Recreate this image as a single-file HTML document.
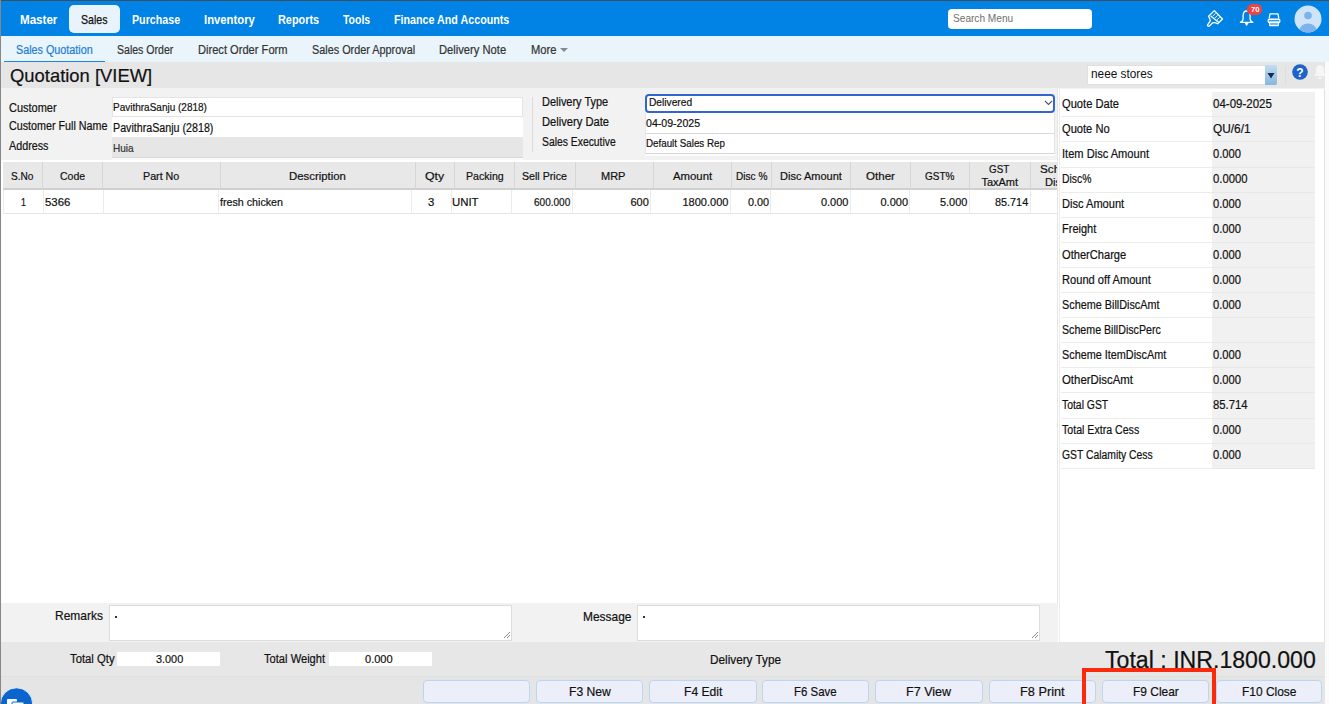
<!DOCTYPE html>
<html><head><meta charset="utf-8">
<style>
*{box-sizing:border-box;margin:0;padding:0}
html,body{width:1329px;height:704px;overflow:hidden;background:#fff;font-family:"Liberation Sans",sans-serif}
.r{position:absolute}
.t{position:absolute;white-space:nowrap;transform-origin:0 0;-webkit-text-stroke:0.2px currentColor}
</style></head><body>
<div class="r" style="left:0px;top:0px;width:1329px;height:704px;background:#ffffff"></div>
<div class="r" style="left:0px;top:0px;width:1329px;height:1px;background:#3d4f5f"></div>
<div class="r" style="left:0px;top:1px;width:1329px;height:35px;background:#0182e5"></div>
<div class="r" style="left:69px;top:5px;width:51px;height:28px;background:#e9f3fb;border-radius:5px"></div>
<div class="t" style="left:19.90px;top:12.70px;font-size:13px;line-height:13px;font-weight:bold;-webkit-text-stroke:0;color:#fff;transform:scaleX(0.8921);">Master</div>
<div class="t" style="left:81.10px;top:12.60px;font-size:13px;line-height:13px;color:#111;transform:scaleX(0.8154);-webkit-text-stroke:0.25px #111;">Sales</div>
<div class="t" style="left:131.60px;top:12.70px;font-size:13px;line-height:13px;font-weight:bold;-webkit-text-stroke:0;color:#fff;transform:scaleX(0.8213);">Purchase</div>
<div class="t" style="left:203.50px;top:12.70px;font-size:13px;line-height:13px;font-weight:bold;-webkit-text-stroke:0;color:#fff;transform:scaleX(0.8684);">Inventory</div>
<div class="t" style="left:277.80px;top:12.70px;font-size:13px;line-height:13px;font-weight:bold;-webkit-text-stroke:0;color:#fff;transform:scaleX(0.8384);">Reports</div>
<div class="t" style="left:343.10px;top:12.70px;font-size:13px;line-height:13px;font-weight:bold;-webkit-text-stroke:0;color:#fff;transform:scaleX(0.8049);">Tools</div>
<div class="t" style="left:393.50px;top:12.70px;font-size:13px;line-height:13px;font-weight:bold;-webkit-text-stroke:0;color:#fff;transform:scaleX(0.8243);">Finance And Accounts</div>
<div class="r" style="left:948px;top:9px;width:144px;height:20px;background:#fff;border-radius:4px"></div>
<div class="t" style="left:952.80px;top:13.11px;font-size:10.5px;line-height:10.5px;color:#6f6f6f;transform:scaleX(0.9636);-webkit-text-stroke:0;">Search Menu</div>
<div class="r" style="left:0px;top:36px;width:1329px;height:26px;background:#e9f4fb"></div>
<div class="t" style="left:15.80px;top:43.64px;font-size:12px;line-height:12px;color:#1b7ed4;transform:scaleX(0.8983);">Sales Quotation</div>
<div class="r" style="left:4px;top:60.6px;width:101px;height:1.6px;background:#1a86e0"></div>
<div class="t" style="left:116.70px;top:43.64px;font-size:12px;line-height:12px;color:#333;transform:scaleX(0.8794);">Sales Order</div>
<div class="t" style="left:197.50px;top:43.64px;font-size:12px;line-height:12px;color:#333;transform:scaleX(0.9259);">Direct Order Form</div>
<div class="t" style="left:311.50px;top:43.64px;font-size:12px;line-height:12px;color:#333;transform:scaleX(0.9039);">Sales Order Approval</div>
<div class="t" style="left:438.70px;top:43.64px;font-size:12px;line-height:12px;color:#333;transform:scaleX(0.9319);">Delivery Note</div>
<div class="t" style="left:530.50px;top:43.64px;font-size:12px;line-height:12px;color:#333;transform:scaleX(0.9320);">More</div>
<svg class="r" style="left:559px;top:47px" width="10" height="6"><path d="M1 1 L9 1 L5 5 Z" fill="#888"/></svg>
<div class="r" style="left:0px;top:62px;width:1325px;height:26px;background:#e6e6e6"></div>
<div class="t" style="left:9.50px;top:66.32px;font-size:19px;line-height:19px;color:#111;transform:scaleX(0.9688);">Quotation [VIEW]</div>
<div class="r" style="left:1087px;top:65px;width:190px;height:20px;background:#fff;border:1px solid #e0e0e0"></div>
<div class="r" style="left:1265px;top:65px;width:12px;height:20px;background:linear-gradient(#c2ddef,#86b6dc);border-radius:0 2px 2px 0"></div>
<svg class="r" style="left:1267px;top:72px" width="8" height="7"><path d="M0.5 1 L7.5 1 L4 6.5 Z" fill="#0e2a5a"/></svg>
<div class="r" style="left:1285px;top:66px;width:1px;height:18px;background:#dddddd"></div>
<div class="t" style="left:1091.00px;top:68.04px;font-size:12px;line-height:12px;color:#111;transform:scaleX(0.9841);-webkit-text-stroke:0;">neee stores</div>
<svg class="r" style="left:1292px;top:64px" width="16" height="16"><circle cx="8" cy="8" r="7.8" fill="#1e63c8"/><text x="8" y="12.5" font-family="Liberation Sans" font-size="12" font-weight="bold" fill="#fff" text-anchor="middle">?</text></svg>
<div class="r" style="left:0px;top:88px;width:1329px;height:72px;background:#f2f2f2"></div>
<div class="t" style="left:9.30px;top:101.84px;font-size:12px;line-height:12px;color:#111;transform:scaleX(0.9150);">Customer</div>
<div class="t" style="left:9.30px;top:119.94px;font-size:12px;line-height:12px;color:#111;transform:scaleX(0.8942);">Customer Full Name</div>
<div class="t" style="left:9.30px;top:140.34px;font-size:12px;line-height:12px;color:#111;transform:scaleX(0.8969);">Address</div>
<div class="r" style="left:112px;top:97px;width:411px;height:20px;background:#fff;border:1px solid #e4e4e4"></div>
<div class="r" style="left:112px;top:117px;width:411px;height:21px;background:#fff;border-bottom:1px solid #e4e4e4"></div>
<div class="r" style="left:112px;top:137px;width:411px;height:21px;background:#e6e6e6"></div>
<div class="t" style="left:113.40px;top:102.09px;font-size:11px;line-height:11px;color:#111;transform:scaleX(0.9086);">PavithraSanju (2818)</div>
<div class="t" style="left:113.40px;top:121.54px;font-size:12px;line-height:12px;color:#111;transform:scaleX(0.8905);">PavithraSanju (2818)</div>
<div class="t" style="left:113.40px;top:142.99px;font-size:11px;line-height:11px;color:#333;transform:scaleX(0.9135);">Huia</div>
<div class="r" style="left:532px;top:97px;width:1px;height:55px;background:#dcdcdc"></div>
<div class="t" style="left:541.80px;top:96.04px;font-size:12px;line-height:12px;color:#111;transform:scaleX(0.9134);">Delivery Type</div>
<div class="t" style="left:541.80px;top:116.24px;font-size:12px;line-height:12px;color:#111;transform:scaleX(0.9306);">Delivery Date</div>
<div class="t" style="left:541.80px;top:136.14px;font-size:12px;line-height:12px;color:#111;transform:scaleX(0.8632);">Sales Executive</div>
<div class="r" style="left:645px;top:94px;width:410px;height:19px;background:#fff;border:2px solid #2f67cf;border-radius:4px"></div>
<svg class="r" style="left:1044px;top:100px" width="10" height="7"><path d="M1 1 L4.5 4.5 L8 1" stroke="#555" stroke-width="1.1" fill="none"/></svg>
<div class="t" style="left:649.00px;top:96.89px;font-size:11px;line-height:11px;color:#111;transform:scaleX(0.9274);">Delivered</div>
<div class="r" style="left:645px;top:113px;width:410px;height:21px;background:#fff;border-bottom:1px solid #d8d8d8;border-right:1px solid #e4e4e4;border-left:1px solid #e8e8e8"></div>
<div class="r" style="left:645px;top:134px;width:410px;height:20px;background:#fff;border-bottom:1px solid #d8d8d8;border-right:1px solid #e4e4e4;border-left:1px solid #e8e8e8"></div>
<div class="r" style="left:645px;top:154px;width:410px;height:2px;background:#fcfcfc"></div>
<div class="t" style="left:645.50px;top:118.09px;font-size:11px;line-height:11px;color:#111;transform:scaleX(0.9615);">04-09-2025</div>
<div class="t" style="left:645.50px;top:137.99px;font-size:11px;line-height:11px;color:#111;transform:scaleX(0.8899);">Default Sales Rep</div>
<div class="r" style="left:112px;top:157px;width:411px;height:3px;background:#fafafa;border-top:1px solid #d8d8d8"></div>
<div class="r" style="left:1px;top:160px;width:1057px;height:2px;background:#fff"></div>
<div class="r" style="left:3px;top:162px;width:1054px;height:28px;background:#e8e8e8;border-bottom:2px solid #d0d0d0"></div>
<div class="r" style="left:42px;top:162px;width:1px;height:27px;background:#d6d6d6"></div>
<div class="r" style="left:102px;top:162px;width:1px;height:27px;background:#d6d6d6"></div>
<div class="r" style="left:220px;top:162px;width:1px;height:27px;background:#d6d6d6"></div>
<div class="r" style="left:415px;top:162px;width:1px;height:27px;background:#d6d6d6"></div>
<div class="r" style="left:454px;top:162px;width:1px;height:27px;background:#d6d6d6"></div>
<div class="r" style="left:514px;top:162px;width:1px;height:27px;background:#d6d6d6"></div>
<div class="r" style="left:575px;top:162px;width:1px;height:27px;background:#d6d6d6"></div>
<div class="r" style="left:653px;top:162px;width:1px;height:27px;background:#d6d6d6"></div>
<div class="r" style="left:731px;top:162px;width:1px;height:27px;background:#d6d6d6"></div>
<div class="r" style="left:771px;top:162px;width:1px;height:27px;background:#d6d6d6"></div>
<div class="r" style="left:850px;top:162px;width:1px;height:27px;background:#d6d6d6"></div>
<div class="r" style="left:910px;top:162px;width:1px;height:27px;background:#d6d6d6"></div>
<div class="r" style="left:969px;top:162px;width:1px;height:27px;background:#d6d6d6"></div>
<div class="r" style="left:1030px;top:162px;width:1px;height:27px;background:#d6d6d6"></div>
<div class="t" style="left:11.20px;top:170.59px;font-size:11px;line-height:11px;color:#111;transform:scaleX(0.9193);">S.No</div>
<div class="t" style="left:59.70px;top:170.59px;font-size:11px;line-height:11px;color:#111;transform:scaleX(0.9547);">Code</div>
<div class="t" style="left:142.80px;top:170.59px;font-size:11px;line-height:11px;color:#111;transform:scaleX(0.9735);">Part No</div>
<div class="t" style="left:288.50px;top:170.59px;font-size:11px;line-height:11px;color:#111;transform:scaleX(1.0345);">Description</div>
<div class="t" style="left:425.20px;top:170.59px;font-size:11px;line-height:11px;color:#111;transform:scaleX(1.1225);">Qty</div>
<div class="t" style="left:465.80px;top:170.59px;font-size:11px;line-height:11px;color:#111;transform:scaleX(0.9653);">Packing</div>
<div class="t" style="left:521.60px;top:170.59px;font-size:11px;line-height:11px;color:#111;transform:scaleX(0.9661);">Sell Price</div>
<div class="t" style="left:601.00px;top:170.59px;font-size:11px;line-height:11px;color:#111;">MRP</div>
<div class="t" style="left:672.60px;top:170.59px;font-size:11px;line-height:11px;color:#111;transform:scaleX(1.0318);">Amount</div>
<div class="t" style="left:735.90px;top:170.59px;font-size:11px;line-height:11px;color:#111;transform:scaleX(0.9179);">Disc %</div>
<div class="t" style="left:780.10px;top:170.59px;font-size:11px;line-height:11px;color:#111;">Disc Amount</div>
<div class="t" style="left:865.80px;top:170.59px;font-size:11px;line-height:11px;color:#111;transform:scaleX(1.0509);">Other</div>
<div class="t" style="left:925.20px;top:170.59px;font-size:11px;line-height:11px;color:#111;transform:scaleX(0.9075);">GST%</div>
<div class="t" style="left:989.40px;top:163.99px;font-size:11px;line-height:11px;color:#111;transform:scaleX(0.8936);">GST</div>
<div class="t" style="left:981.40px;top:176.99px;font-size:11px;line-height:11px;color:#111;">TaxAmt</div>
<div class="r" style="left:1031px;top:162px;width:26px;height:26px;overflow:hidden">
<div class="t" style="left:9.30px;top:1.99px;font-size:11px;line-height:11px;color:#111;transform:scaleX(1.0646);">Sch</div>
<div class="t" style="left:14.00px;top:14.99px;font-size:11px;line-height:11px;color:#111;transform:scaleX(1.0066);">Dis</div>
</div>
<div class="r" style="left:3px;top:190px;width:1054px;height:24px;background:#fff;border-bottom:1px solid #e6e6e6"></div>
<div class="r" style="left:43px;top:190px;width:1px;height:24px;background:#ececec"></div>
<div class="r" style="left:103px;top:190px;width:1px;height:24px;background:#ececec"></div>
<div class="r" style="left:218px;top:190px;width:1px;height:24px;background:#ececec"></div>
<div class="r" style="left:411px;top:190px;width:1px;height:24px;background:#ececec"></div>
<div class="r" style="left:451px;top:190px;width:1px;height:24px;background:#ececec"></div>
<div class="r" style="left:511px;top:190px;width:1px;height:24px;background:#ececec"></div>
<div class="r" style="left:572px;top:190px;width:1px;height:24px;background:#ececec"></div>
<div class="r" style="left:650px;top:190px;width:1px;height:24px;background:#ececec"></div>
<div class="r" style="left:730px;top:190px;width:1px;height:24px;background:#ececec"></div>
<div class="r" style="left:770px;top:190px;width:1px;height:24px;background:#ececec"></div>
<div class="r" style="left:850px;top:190px;width:1px;height:24px;background:#ececec"></div>
<div class="r" style="left:909px;top:190px;width:1px;height:24px;background:#ececec"></div>
<div class="r" style="left:969px;top:190px;width:1px;height:24px;background:#ececec"></div>
<div class="r" style="left:1030px;top:190px;width:1px;height:24px;background:#ececec"></div>
<div class="r" style="left:3px;top:190px;width:1px;height:24px;background:#ececec"></div>
<div class="t" style="left:21.10px;top:197.09px;font-size:11px;line-height:11px;color:#111;transform:scaleX(0.8026);">1</div>
<div class="t" style="left:44.70px;top:197.09px;font-size:11px;line-height:11px;color:#111;transform:scaleX(1.0378);">5366</div>
<div class="t" style="left:220.00px;top:197.09px;font-size:11px;line-height:11px;color:#111;transform:scaleX(0.9724);">fresh chicken</div>
<div class="t" style="left:428.00px;top:197.09px;font-size:11px;line-height:11px;color:#111;transform:scaleX(1.0319);">3</div>
<div class="t" style="left:452.40px;top:197.09px;font-size:11px;line-height:11px;color:#111;transform:scaleX(1.0356);">UNIT</div>
<div class="t" style="left:534.00px;top:197.09px;font-size:11px;line-height:11px;color:#111;transform:scaleX(0.9103);">600.000</div>
<div class="t" style="left:630.50px;top:197.09px;font-size:11px;line-height:11px;color:#111;">600</div>
<div class="t" style="left:682.50px;top:197.09px;font-size:11px;line-height:11px;color:#111;">1800.000</div>
<div class="t" style="left:748.00px;top:197.09px;font-size:11px;line-height:11px;color:#111;transform:scaleX(0.9862);">0.00</div>
<div class="t" style="left:820.50px;top:197.09px;font-size:11px;line-height:11px;color:#111;transform:scaleX(0.9944);">0.000</div>
<div class="t" style="left:880.50px;top:197.09px;font-size:11px;line-height:11px;color:#111;">0.000</div>
<div class="t" style="left:940.20px;top:197.09px;font-size:11px;line-height:11px;color:#111;transform:scaleX(0.9944);">5.000</div>
<div class="t" style="left:994.50px;top:197.09px;font-size:11px;line-height:11px;color:#111;transform:scaleX(0.9863);">85.714</div>
<div class="r" style="left:1058px;top:88px;width:271px;height:555px;background:#f2f2f2"></div>
<div class="r" style="left:1057px;top:89px;width:268px;height:554px;background:#fff;border-left:1px solid #e6e6e6;border-right:1px solid #e2e2e2"></div>
<div class="r" style="left:1059px;top:89px;width:1px;height:554px;background:#ececec"></div>
<div class="r" style="left:1061px;top:92px;width:151px;height:25px;background:#fff;border-bottom:1px solid #ececec"></div>
<div class="r" style="left:1212px;top:92px;width:103px;height:25px;background:#f1f1f1;border-bottom:1px solid #e8e8e8"></div>
<div class="t" style="left:1061.80px;top:97.99px;font-size:12px;line-height:12px;color:#111;transform:scaleX(0.9278);">Quote Date</div>
<div class="t" style="left:1213.00px;top:97.99px;font-size:12px;line-height:12px;color:#111;transform:scaleX(0.9596);">04-09-2025</div>
<div class="r" style="left:1061px;top:117px;width:151px;height:25px;background:#fff;border-bottom:1px solid #ececec"></div>
<div class="r" style="left:1212px;top:117px;width:103px;height:25px;background:#f1f1f1;border-bottom:1px solid #e8e8e8"></div>
<div class="t" style="left:1061.80px;top:123.09px;font-size:12px;line-height:12px;color:#111;transform:scaleX(0.9268);">Quote No</div>
<div class="t" style="left:1213.00px;top:123.09px;font-size:12px;line-height:12px;color:#111;transform:scaleX(0.9884);">QU/6/1</div>
<div class="r" style="left:1061px;top:142px;width:151px;height:26px;background:#fff;border-bottom:1px solid #ececec"></div>
<div class="r" style="left:1212px;top:142px;width:103px;height:26px;background:#f1f1f1;border-bottom:1px solid #e8e8e8"></div>
<div class="t" style="left:1061.80px;top:148.19px;font-size:12px;line-height:12px;color:#111;transform:scaleX(0.9248);">Item Disc Amount</div>
<div class="t" style="left:1213.00px;top:148.19px;font-size:12px;line-height:12px;color:#111;transform:scaleX(0.9315);">0.000</div>
<div class="r" style="left:1061px;top:168px;width:151px;height:25px;background:#fff;border-bottom:1px solid #ececec"></div>
<div class="r" style="left:1212px;top:168px;width:103px;height:25px;background:#f1f1f1;border-bottom:1px solid #e8e8e8"></div>
<div class="t" style="left:1061.80px;top:173.29px;font-size:12px;line-height:12px;color:#111;transform:scaleX(0.8657);">Disc%</div>
<div class="t" style="left:1213.00px;top:173.29px;font-size:12px;line-height:12px;color:#111;transform:scaleX(0.9395);">0.0000</div>
<div class="r" style="left:1061px;top:193px;width:151px;height:25px;background:#fff;border-bottom:1px solid #ececec"></div>
<div class="r" style="left:1212px;top:193px;width:103px;height:25px;background:#f1f1f1;border-bottom:1px solid #e8e8e8"></div>
<div class="t" style="left:1061.80px;top:198.39px;font-size:12px;line-height:12px;color:#111;transform:scaleX(0.9231);">Disc Amount</div>
<div class="t" style="left:1213.00px;top:198.39px;font-size:12px;line-height:12px;color:#111;transform:scaleX(0.9315);">0.000</div>
<div class="r" style="left:1061px;top:218px;width:151px;height:25px;background:#fff;border-bottom:1px solid #ececec"></div>
<div class="r" style="left:1212px;top:218px;width:103px;height:25px;background:#f1f1f1;border-bottom:1px solid #e8e8e8"></div>
<div class="t" style="left:1061.80px;top:223.49px;font-size:12px;line-height:12px;color:#111;transform:scaleX(0.9164);">Freight</div>
<div class="t" style="left:1213.00px;top:223.49px;font-size:12px;line-height:12px;color:#111;transform:scaleX(0.9315);">0.000</div>
<div class="r" style="left:1061px;top:243px;width:151px;height:25px;background:#fff;border-bottom:1px solid #ececec"></div>
<div class="r" style="left:1212px;top:243px;width:103px;height:25px;background:#f1f1f1;border-bottom:1px solid #e8e8e8"></div>
<div class="t" style="left:1061.80px;top:248.59px;font-size:12px;line-height:12px;color:#111;transform:scaleX(0.9256);">OtherCharge</div>
<div class="t" style="left:1213.00px;top:248.59px;font-size:12px;line-height:12px;color:#111;transform:scaleX(0.9315);">0.000</div>
<div class="r" style="left:1061px;top:268px;width:151px;height:25px;background:#fff;border-bottom:1px solid #ececec"></div>
<div class="r" style="left:1212px;top:268px;width:103px;height:25px;background:#f1f1f1;border-bottom:1px solid #e8e8e8"></div>
<div class="t" style="left:1061.80px;top:273.69px;font-size:12px;line-height:12px;color:#111;transform:scaleX(0.9262);">Round off Amount</div>
<div class="t" style="left:1213.00px;top:273.69px;font-size:12px;line-height:12px;color:#111;transform:scaleX(0.9315);">0.000</div>
<div class="r" style="left:1061px;top:293px;width:151px;height:25px;background:#fff;border-bottom:1px solid #ececec"></div>
<div class="r" style="left:1212px;top:293px;width:103px;height:25px;background:#f1f1f1;border-bottom:1px solid #e8e8e8"></div>
<div class="t" style="left:1061.80px;top:298.79px;font-size:12px;line-height:12px;color:#111;transform:scaleX(0.9028);">Scheme BillDiscAmt</div>
<div class="t" style="left:1213.00px;top:298.79px;font-size:12px;line-height:12px;color:#111;transform:scaleX(0.9315);">0.000</div>
<div class="r" style="left:1061px;top:318px;width:151px;height:25px;background:#fff;border-bottom:1px solid #ececec"></div>
<div class="r" style="left:1212px;top:318px;width:103px;height:25px;background:#f1f1f1;border-bottom:1px solid #e8e8e8"></div>
<div class="t" style="left:1061.80px;top:323.89px;font-size:12px;line-height:12px;color:#111;transform:scaleX(0.8872);">Scheme BillDiscPerc</div>
<div class="r" style="left:1061px;top:343px;width:151px;height:25px;background:#fff;border-bottom:1px solid #ececec"></div>
<div class="r" style="left:1212px;top:343px;width:103px;height:25px;background:#f1f1f1;border-bottom:1px solid #e8e8e8"></div>
<div class="t" style="left:1061.80px;top:348.99px;font-size:12px;line-height:12px;color:#111;transform:scaleX(0.9031);">Scheme ItemDiscAmt</div>
<div class="t" style="left:1213.00px;top:348.99px;font-size:12px;line-height:12px;color:#111;transform:scaleX(0.9315);">0.000</div>
<div class="r" style="left:1061px;top:368px;width:151px;height:25px;background:#fff;border-bottom:1px solid #ececec"></div>
<div class="r" style="left:1212px;top:368px;width:103px;height:25px;background:#f1f1f1;border-bottom:1px solid #e8e8e8"></div>
<div class="t" style="left:1061.80px;top:374.09px;font-size:12px;line-height:12px;color:#111;transform:scaleX(0.9505);">OtherDiscAmt</div>
<div class="t" style="left:1213.00px;top:374.09px;font-size:12px;line-height:12px;color:#111;transform:scaleX(0.9315);">0.000</div>
<div class="r" style="left:1061px;top:393px;width:151px;height:26px;background:#fff;border-bottom:1px solid #ececec"></div>
<div class="r" style="left:1212px;top:393px;width:103px;height:26px;background:#f1f1f1;border-bottom:1px solid #e8e8e8"></div>
<div class="t" style="left:1061.80px;top:399.19px;font-size:12px;line-height:12px;color:#111;transform:scaleX(0.8661);">Total GST</div>
<div class="t" style="left:1213.00px;top:399.19px;font-size:12px;line-height:12px;color:#111;transform:scaleX(0.9395);">85.714</div>
<div class="r" style="left:1061px;top:419px;width:151px;height:25px;background:#fff;border-bottom:1px solid #ececec"></div>
<div class="r" style="left:1212px;top:419px;width:103px;height:25px;background:#f1f1f1;border-bottom:1px solid #e8e8e8"></div>
<div class="t" style="left:1061.80px;top:424.29px;font-size:12px;line-height:12px;color:#111;transform:scaleX(0.8837);">Total Extra Cess</div>
<div class="t" style="left:1213.00px;top:424.29px;font-size:12px;line-height:12px;color:#111;transform:scaleX(0.9315);">0.000</div>
<div class="r" style="left:1061px;top:444px;width:151px;height:25px;background:#fff;border-bottom:1px solid #ececec"></div>
<div class="r" style="left:1212px;top:444px;width:103px;height:25px;background:#f1f1f1;border-bottom:1px solid #e8e8e8"></div>
<div class="t" style="left:1061.80px;top:449.39px;font-size:12px;line-height:12px;color:#111;transform:scaleX(0.8628);">GST Calamity Cess</div>
<div class="t" style="left:1213.00px;top:449.39px;font-size:12px;line-height:12px;color:#111;transform:scaleX(0.9315);">0.000</div>
<div class="r" style="left:1px;top:603px;width:1057px;height:39px;background:#f2f2f2"></div>
<div class="t" style="left:55.00px;top:609.40px;font-size:13px;line-height:13px;color:#111;transform:scaleX(0.9212);">Remarks</div>
<div class="r" style="left:109px;top:605px;width:403px;height:36px;background:#fff;border:1px solid #dcdcdc"></div>
<div class="t" style="left:583.10px;top:609.50px;font-size:13px;line-height:13px;color:#111;transform:scaleX(0.9189);">Message</div>
<div class="r" style="left:637px;top:605px;width:403px;height:36px;background:#fff;border:1px solid #dcdcdc"></div>
<div class="r" style="left:115px;top:616px;width:2px;height:2px;background:#333"></div>
<div class="r" style="left:643px;top:616px;width:2px;height:2px;background:#333"></div>
<svg class="r" style="left:503px;top:631px" width="8" height="8"><path d="M7 1 L1 7 M7 4 L4 7" stroke="#888" stroke-width="1"/></svg>
<svg class="r" style="left:1031px;top:631px" width="8" height="8"><path d="M7 1 L1 7 M7 4 L4 7" stroke="#888" stroke-width="1"/></svg>
<div class="r" style="left:1px;top:642px;width:1328px;height:34px;background:#e7e7e7"></div>
<div class="r" style="left:1px;top:676px;width:1328px;height:28px;background:#e5e5e5;border-top:1px solid #e0e0e0"></div>
<div class="t" style="left:70.00px;top:653.44px;font-size:12px;line-height:12px;color:#111;transform:scaleX(0.9421);">Total Qty</div>
<div class="r" style="left:117px;top:652px;width:103px;height:14px;background:#fff"></div>
<div class="t" style="left:155.80px;top:654.07px;font-size:11.5px;line-height:11.5px;color:#111;transform:scaleX(0.9442);">3.000</div>
<div class="t" style="left:264.20px;top:653.44px;font-size:12px;line-height:12px;color:#111;transform:scaleX(0.9283);">Total Weight</div>
<div class="r" style="left:329px;top:652px;width:103px;height:14px;background:#fff"></div>
<div class="t" style="left:365.40px;top:654.07px;font-size:11.5px;line-height:11.5px;color:#111;transform:scaleX(0.9616);">0.000</div>
<div class="t" style="left:709.50px;top:653.64px;font-size:12px;line-height:12px;color:#111;transform:scaleX(0.9796);">Delivery Type</div>
<div class="t" style="left:1105.40px;top:648.71px;font-size:23.5px;line-height:23.5px;color:#111;transform:scaleX(0.9841);">Total : INR.1800.000</div>
<div class="r" style="left:423px;top:680px;width:107px;height:23px;background:#eceff9;border:1px solid #b9d6f2;border-radius:4px"></div>
<div class="r" style="left:536px;top:680px;width:107px;height:23px;background:#eceff9;border:1px solid #b9d6f2;border-radius:4px"></div>
<div class="t" style="left:568.55px;top:685.40px;font-size:13px;line-height:13px;color:#111;transform:scaleX(0.9342);">F3 New</div>
<div class="r" style="left:649px;top:680px;width:108px;height:23px;background:#eceff9;border:1px solid #b9d6f2;border-radius:4px"></div>
<div class="t" style="left:683.80px;top:685.40px;font-size:13px;line-height:13px;color:#111;transform:scaleX(0.9318);">F4 Edit</div>
<div class="r" style="left:762px;top:680px;width:107px;height:23px;background:#eceff9;border:1px solid #b9d6f2;border-radius:4px"></div>
<div class="t" style="left:794.20px;top:685.40px;font-size:13px;line-height:13px;color:#111;transform:scaleX(0.8797);">F6 Save</div>
<div class="r" style="left:875px;top:680px;width:108px;height:23px;background:#eceff9;border:1px solid #b9d6f2;border-radius:4px"></div>
<div class="t" style="left:906.45px;top:685.40px;font-size:13px;line-height:13px;color:#111;transform:scaleX(0.9650);">F7 View</div>
<div class="r" style="left:989px;top:680px;width:107px;height:23px;background:#eceff9;border:1px solid #b9d6f2;border-radius:4px"></div>
<div class="t" style="left:1020.20px;top:685.40px;font-size:13px;line-height:13px;color:#111;transform:scaleX(0.9802);">F8 Print</div>
<div class="r" style="left:1102px;top:680px;width:107px;height:23px;background:#eceff9;border:1px solid #b9d6f2;border-radius:4px"></div>
<div class="t" style="left:1132.60px;top:685.40px;font-size:13px;line-height:13px;color:#111;transform:scaleX(0.9187);">F9 Clear</div>
<div class="r" style="left:1216px;top:680px;width:106px;height:23px;background:#eceff9;border:1px solid #b9d6f2;border-radius:4px"></div>
<div class="t" style="left:1241.75px;top:685.40px;font-size:13px;line-height:13px;color:#111;transform:scaleX(0.9194);">F10 Close</div>
<div class="r" style="left:1082px;top:668px;width:134px;height:40px;border:4px solid #fb2a0c"></div>
<svg class="r" style="left:0px;top:687px" width="34" height="17"><circle cx="16.5" cy="17" r="16.2" fill="#0a66cc" stroke="#fff" stroke-width="0.8"/><rect x="7" y="12" width="10" height="6" rx="1" fill="#fff"/><rect x="12" y="15" width="12" height="4" rx="1" fill="#fff" stroke="#0a66cc" stroke-width="1"/></svg>
<svg class="r" style="left:1205px;top:8px" width="20" height="20" viewBox="0 0 20 20">
<g fill="none" stroke="#fff" stroke-width="1.3" stroke-linejoin="round" stroke-linecap="round">
<path d="M9.3 2.6 L17.5 11 L12.7 15.8 Q10.2 14.3 7.7 14.8 L4.6 17.9 Q3.2 18.9 2.4 17.2 L5.3 12.8 Q5 10.2 3.6 8.3 Z"/>
<path d="M6 8.2 L13.6 14.2"/>
<path d="M10.3 5.6 L8.3 7.6 M12.3 7.6 L10.3 9.6 M14.3 9.6 L12.3 11.6" stroke-width="1"/>
</g></svg>
<svg class="r" style="left:1239px;top:10px" width="16" height="17" viewBox="0 0 16 17">
<path d="M7.6 1 C5 1 4.1 3.2 4.1 6 L4.1 9.3 Q3.8 11 1.4 12.4 L13.8 12.4 Q11.4 11 11.1 9.3 L11.1 6 C11.1 3.2 10.2 1 7.6 1 Z" fill="none" stroke="#fff" stroke-width="1.3" stroke-linejoin="round"/>
<path d="M6 12.8 L7.6 15.6 L9.2 12.8 Z" fill="#fff" stroke="#fff" stroke-width="0.8" stroke-linejoin="round"/>
</svg>
<div class="r" style="left:1247px;top:4px;width:15px;height:11px;background:#ec4343;border-radius:5px"></div>
<div class="t" style="left:1250.90px;top:5.95px;font-size:7.5px;line-height:7.5px;font-weight:bold;-webkit-text-stroke:0;color:#fff;transform:scaleX(1.0210);">70</div>
<svg class="r" style="left:1266px;top:12px" width="16" height="15" viewBox="0 0 16 15">
<path d="M3.2 6.4 L4 1.8 L12 1.8 L12.8 6.4" fill="none" stroke="#fff" stroke-width="1.3" stroke-linejoin="round"/>
<rect x="1.6" y="6.4" width="12.8" height="4.8" rx="1.6" fill="#fff"/>
<rect x="2.6" y="8.2" width="10.8" height="1.1" fill="#0182e5"/>
<path d="M3.6 10.4 L3.9 13.6 L12.1 13.6 L12.4 10.4" fill="none" stroke="#fff" stroke-width="1.3" stroke-linejoin="round"/>
<rect x="4.6" y="11.6" width="6.8" height="1.1" fill="#bcd9f5"/>
</svg>
<svg class="r" style="left:1294px;top:5px" width="28" height="28" viewBox="0 0 28 28">
<defs><clipPath id="cc"><circle cx="14" cy="14" r="13.5"/></clipPath></defs>
<circle cx="14" cy="14" r="13.5" fill="#cfe4f9"/>
<g clip-path="url(#cc)" fill="#7db4ee"><circle cx="14" cy="10.5" r="3.8"/><ellipse cx="14" cy="25.5" rx="8.5" ry="7"/></g>
</svg>
<svg class="r" style="left:1313px;top:63px" width="14" height="20" viewBox="0 0 14 20">
<path d="M7 2 C4.5 2 3 4 3 7 L3 10 L1 13 L13 13 L11 10 L11 7 C11 4 9.5 2 7 2 Z" fill="#f6f6f6"/>
<rect x="5.5" y="14" width="3" height="2" fill="#f6f6f6"/></svg>
<div class="r" style="left:1325px;top:62px;width:4px;height:642px;background:#fbfbfb"></div>
<div class="r" style="left:0px;top:0px;width:1px;height:704px;background:#878787"></div>
</body></html>
